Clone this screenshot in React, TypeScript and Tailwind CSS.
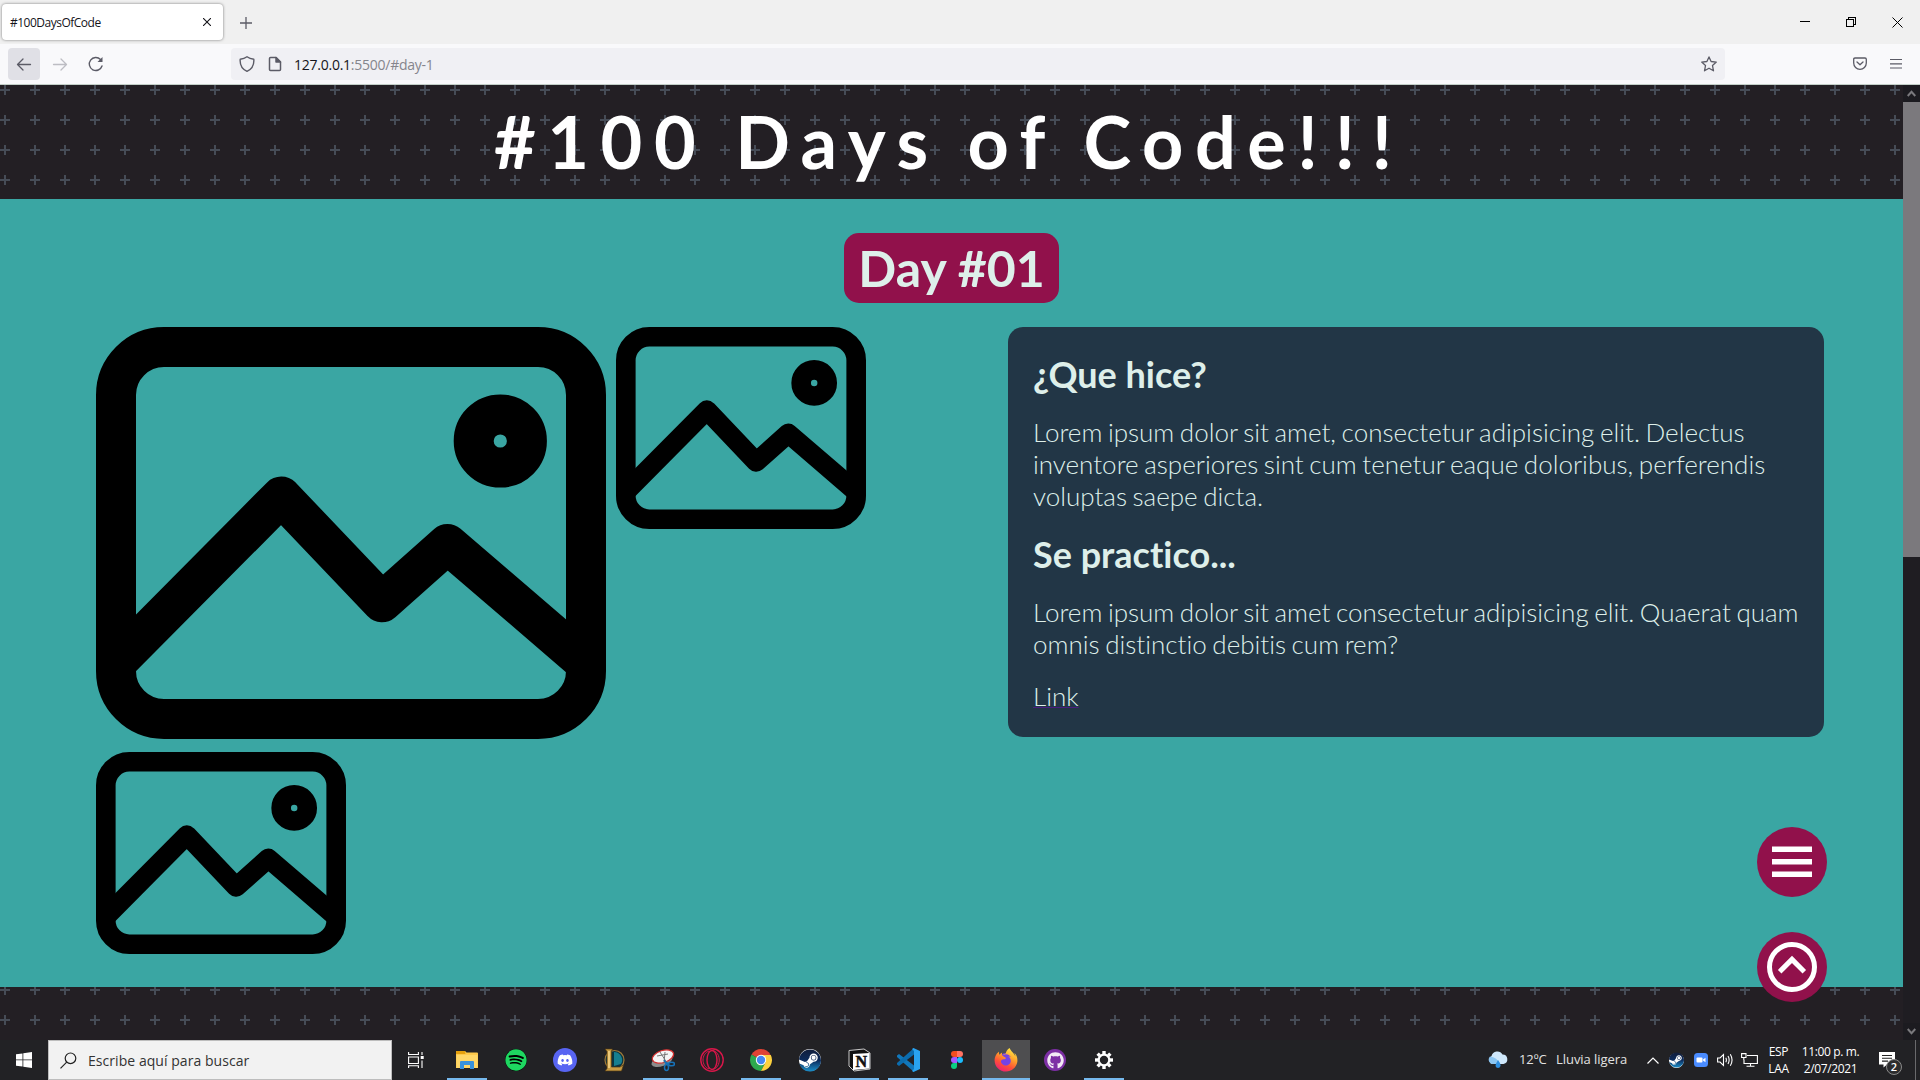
import React from "react";
import { FaDiscord, FaFirefoxBrowser, FaGithub, FaSpotify, FaSteam } from "react-icons/fa";

function Pattern() {
  return (
    <svg className="absolute inset-0 h-full w-full" aria-hidden="true">
      <defs>
        <pattern id="plus" width="30" height="30" patternUnits="userSpaceOnUse">
          <path d="M0 5H10M5 0V10" stroke="#464c57" strokeWidth="2" />
        </pattern>
      </defs>
      <rect width="100%" height="100%" fill="url(#plus)" />
    </svg>
  );
}

function Picture({ className }: { className: string }) {
  return (
    <svg viewBox="0 0 510 412" preserveAspectRatio="none" className={className} fill="none" stroke="#000" strokeWidth="40" strokeLinejoin="round">
      <rect x="20" y="20" width="470" height="372" rx="48" />
      <circle cx="404.300" cy="114" r="26.600" />
      <path d="M20 336L185.3 169.5L286 275.3L351.5 217L490 336" />
    </svg>
  );
}

function TitleBar() {
  return (
    <div className="flex h-11 items-start bg-[#f0f0f0] pl-0.5">
      <div className="mt-1 flex h-9 w-[221px] items-center rounded-[4px] bg-white pr-3 pl-2 shadow-[0_0_3px_rgba(0,0,0,0.5)]">
        <span className="flex-1 pt-0.5 text-[12px] tracking-[-0.5px] whitespace-nowrap text-[#15141a]">#100DaysOfCode</span>
        <svg width="8" height="8" viewBox="0 0 8 8" stroke="#15141a" strokeWidth="1.1"><path d="M0 0L8 8M8 0L0 8" /></svg>
      </div>
      <svg width="12" height="12" viewBox="0 0 12 12" stroke="#5b5b66" strokeWidth="1.3" className="mt-[17px] ml-[17px]"><path d="M0 6H12M6 0V12" /></svg>
      <div className="flex-1" />
      <svg width="10" height="10" viewBox="0 0 10 10" stroke="#000" className="mt-[17px]" shapeRendering="crispEdges"><path d="M0 4.5H10" /></svg>
      <svg width="10" height="10" viewBox="0 0 10 10" stroke="#000" fill="none" className="mt-[17px] ml-9" shapeRendering="crispEdges"><path d="M.5 2.5H7.5V9.5H.5ZM2.5 2.5V.5H9.5V7.5H7.5" /></svg>
      <svg width="11" height="11" viewBox="0 0 11 11" stroke="#000" className="mt-[17px] mr-[17px] ml-9"><path d="M.5 .5L10.500 10.500M10.500 .5L.5 10.500" /></svg>
    </div>
  );
}

function NavBar() {
  return (
    <div className="flex h-[41px] items-start border-b border-[#c3cfc8] bg-[#f9f9fb] pt-1 pl-2">
      <div className="flex h-8 w-8 items-center justify-center rounded-[4px] bg-[#e0e0e6]">
        <svg width="16" height="16" viewBox="0 0 16 16" fill="none" stroke="#5b5b66" strokeWidth="1.3" strokeLinecap="round" strokeLinejoin="round"><path d="M1.500 8.500H14.500M7 3L1.500 8.500L7 14" /></svg>
      </div>
      <div className="ml-1 flex h-8 w-8 items-center justify-center">
        <svg width="16" height="16" viewBox="0 0 16 16" fill="none" stroke="#bdbdc3" strokeWidth="1.3" strokeLinecap="round" strokeLinejoin="round"><path d="M1.500 8.500H14.500M9 3L14.500 8.500L9 14" /></svg>
      </div>
      <div className="ml-1 flex h-8 w-8 items-center justify-center">
        <svg width="16" height="16" viewBox="0 0 16 16" fill="none" stroke="#5b5b66" strokeWidth="1.4" strokeLinecap="round"><path d="M14 10A6.500 6.500 0 1 1 12.500 3.500" /><path d="M14.500 1V6H9.500Z" fill="#5b5b66" stroke="none" /></svg>
      </div>
      <div className="ml-[119px] flex h-8 w-[1494px] items-center rounded-[4px] bg-[#f0f0f4] pr-2 pl-2">
        <svg width="16" height="16" viewBox="0 0 16 16" fill="none" stroke="#5b5b66" strokeWidth="1.4" strokeLinejoin="round"><path d="M8 .8C6 2.300 3.500 3 1.200 3.200C.8 8 3 13 8 15.300C13 13 15.200 8 14.800 3.200C12.500 3 10 2.300 8 .8Z" /></svg>
        <svg width="14" height="16" viewBox="0 0 14 16" fill="none" stroke="#5b5b66" strokeWidth="1.5" strokeLinejoin="round" className="ml-[13px]"><path d="M2.500 1.500H8L12.500 6V13.500Q12.500 14.500 11.500 14.500H2.500Q1.500 14.500 1.500 13.500V2.500Q1.500 1.500 2.500 1.500Z" /><path d="M8 1.500V6H12.500Z" fill="#5b5b66" /></svg>
        <span className="ml-[12px] pt-px text-[14px] tracking-[-0.25px] whitespace-nowrap text-[#85858c]"><span className="text-[#15141a]">127.0.0.1</span>:5500/#day-1</span>
        <div className="flex-1" />
        <svg width="16" height="16" viewBox="0 0 16 16" fill="none" stroke="#5b5b66" strokeWidth="1.3" strokeLinejoin="round"><path d="M8 .9L10.100 5.500L15.300 6.100L11.500 9.600L12.500 14.800L8 12.200L3.500 14.800L4.500 9.600L.7 6.100L5.900 5.500Z" /></svg>
      </div>
      <div className="ml-32 flex h-8 items-center">
        <svg width="14" height="14" viewBox="0 0 14 14" fill="none" stroke="#5b5b66" strokeWidth="1.3" strokeLinecap="round" strokeLinejoin="round"><path d="M2 1H12Q13.300 1 13.300 2.300V6A6.300 6.300 0 0 1 .7 6V2.300Q.7 1 2 1Z" /><path d="M4 5L7 7.800L10 5" /></svg>
        <svg width="12" height="12" viewBox="0 0 12 12" stroke="#5b5b66" strokeWidth="1.2" className="ml-[23px]"><path d="M0 1.500H12M0 5.800H12M0 10H12" /></svg>
      </div>
    </div>
  );
}

function Scrollbar() {
  return (
    <div className="flex w-[17px] flex-col bg-[#1f1d22]">
      <div className="flex h-[17px] items-center justify-center bg-[#1c1b20]">
        <svg width="9" height="7" viewBox="0 0 9 7" fill="none" stroke="#7a797d" strokeWidth="2"><path d="M.7 6L4.500 1.800L8.300 6" /></svg>
      </div>
      <div className="h-[455px] bg-[#7b797d]" />
      <div className="flex-1" />
      <div className="flex h-[17px] items-center justify-center bg-[#1c1b20]">
        <svg width="9" height="7" viewBox="0 0 9 7" fill="none" stroke="#7a797d" strokeWidth="2"><path d="M.7 1L4.500 5.200L8.300 1" /></svg>
      </div>
    </div>
  );
}

function Page() {
  return (
    <div className="relative flex-1 overflow-hidden bg-[#231f24] font-['Lato',sans-serif] [font-variant-ligatures:none]">
      <Pattern />
      <header className="relative flex h-[114px] items-center justify-center">
        <h1 className="pb-0.5 text-[72px] leading-[86px] font-bold tracking-[11.6px] whitespace-nowrap text-white [word-spacing:-1.3px]">
          #100 Days of Code<span className="tracking-[17px]">!!!</span>
        </h1>
      </header>
      <main className="relative flex h-[788px] flex-col items-center bg-[#3aa6a3] pt-[34px]">
        <h2 className="h-[70px] w-[215px] rounded-[15px] bg-[#91114b] py-[5px] text-center text-[50px] leading-[60px] font-bold whitespace-nowrap text-[#deefea]">Day #01</h2>
        <div className="mt-6 flex w-full items-start pr-[79px] pl-24">
          <div className="flex w-[816px] flex-wrap items-start gap-x-[10px] gap-y-[13px]">
            <Picture className="h-[412px] w-[510px]" />
            <Picture className="h-[202px] w-[250px]" />
            <Picture className="h-[202px] w-[250px]" />
          </div>
          <article className="ml-24 h-[410px] w-[816px] rounded-[15px] bg-[#223646] p-[25px] text-[#deefea]">
            <h3 className="text-[36px] leading-[44px] font-bold">¿Que hice?</h3>
            <p className="mt-5 text-[26px] leading-8 font-light whitespace-nowrap [word-spacing:-1.5px]">
              Lorem ipsum dolor sit amet, consectetur adipisicing elit. Delectus<br />inventore asperiores sint cum tenetur eaque doloribus, perferendis<br />voluptas saepe dicta.
            </p>
            <h3 className="mt-5 text-[36px] leading-[44px] font-bold">Se practico...</h3>
            <p className="mt-5 text-[26px] leading-8 font-light whitespace-nowrap [word-spacing:-1.5px]">
              Lorem ipsum dolor sit amet consectetur adipisicing elit. Quaerat quam<br />omnis distinctio debitis cum rem?
            </p>
            <p className="mt-5 text-[26px] leading-8 font-light">
              <a className="underline decoration-[#4b1d80] decoration-1 underline-offset-1">Link</a>
            </p>
          </article>
        </div>
      </main>
      <div className="absolute right-[76px] bottom-[38px] flex flex-col gap-[35px]">
        <button className="flex h-[70px] w-[70px] items-center justify-center rounded-full bg-[#91114b]">
          <svg width="40" height="32" viewBox="0 0 40 32" stroke="#fff" strokeWidth="5.500"><path d="M0 3.300H40M0 15.800H40M0 28.300H40" /></svg>
        </button>
        <button className="flex h-[70px] w-[70px] items-center justify-center rounded-full bg-[#91114b]">
          <svg width="50" height="50" viewBox="0 0 50 50" fill="none" stroke="#fff" strokeWidth="5"><circle cx="25" cy="25" r="22.500" /><path d="M12.700 29.700L25 17.400L37.300 29.700" /></svg>
        </button>
      </div>
    </div>
  );
}

function Cell({ active, focused, children }: { active?: boolean; focused?: boolean; children: React.ReactNode }) {
  return (
    <div className={focused ? "mr-px flex h-10 w-12 flex-col items-center bg-[#4e4e50]" : "mr-px flex h-10 w-12 flex-col items-center"}>
      <div className="flex h-[38px] items-center justify-center pt-0.5">{children}</div>
      {active && <div className={focused ? "h-0.5 w-12 bg-[#76b9ed]" : "h-0.5 w-10 bg-[#76b9ed]"} />}
    </div>
  );
}

function SteamBadge({ className, id, size }: { className: string; id: string; size: number }) {
  return (
    <span className={className}>
      <svg width="0" height="0" className="absolute"><defs><linearGradient id={id} x1="0" y1="0" x2="0" y2="1"><stop offset="0" stopColor="#111d3a" /><stop offset=".5" stopColor="#0c2b5c" /><stop offset="1" stopColor="#1b8fc9" /></linearGradient></defs></svg>
      <FaSteam size={size} fill={`url(#${id})`} />
    </span>
  );
}

function Taskbar() {
  return (
    <div className="flex h-10 items-center bg-[#222225] font-['Open_Sans',sans-serif] text-white">
      <div className="flex h-10 w-12 items-center justify-center">
        <svg width="16" height="16" viewBox="0 0 16 16" fill="#fff"><path d="M0 2.300L6.500 1.400V7.500H0ZM7.300 1.300L16 0V7.500H7.300ZM0 8.300H6.500V14.500L0 13.700ZM7.300 8.300H16V16L7.300 14.700Z" /></svg>
      </div>
      <div className="flex h-10 w-[344px] items-center border border-[#bdbdbd] bg-[#f2f2f2] pl-[11px]">
        <svg width="17" height="17" viewBox="0 0 17 17" fill="none" stroke="#222" strokeWidth="1.200"><circle cx="10.500" cy="6.300" r="5.300" /><path d="M6.700 10.200L.5 16.400" /></svg>
        <span className="ml-[11px] text-[14px] tracking-[0.05px] whitespace-nowrap text-[#333]">Escribe aquí para buscar</span>
      </div>
      <div className="mr-[3px] flex h-10 w-12 items-center justify-center">
        <svg width="16" height="16" viewBox="0 0 16 16" fill="none" stroke="#fff" strokeWidth="1.100"><path d="M.6 0V2.500H10.400V0M.6 5H10.400V11.500H.6ZM.6 16V13.800H10.400V16M14 0V3M14 8.500V16" /><rect x="12.700" y="4" width="3" height="3" fill="#fff" stroke="none" /></svg>
      </div>
      <Cell active>
        <svg width="22" height="18" viewBox="0 0 22 18"><path d="M0 0H9L10.500 1.500H21Q22 1.500 22 2.500V17H0Z" fill="#fdc94c" /><path d="M0 0H9L9.500 3H0Z" fill="#e5a00d" /><path d="M.5 4H21.500V17H.5Z" fill="#ffd768" /><path d="M4 18V11Q4 10 5 10H17Q18 10 18 11V18H14V14H8V18Z" fill="#3892dc" /></svg>
      </Cell>
      <Cell>
        <div className="flex h-[22px] w-[22px] items-center justify-center rounded-full bg-black"><FaSpotify size={22} color="#1ed760" /></div>
      </Cell>
      <Cell>
        <div className="flex h-6 w-6 items-center justify-center rounded-full bg-[#5865f2]"><FaDiscord size={16} color="#fff" /></div>
      </Cell>
      <Cell>
        <svg width="22" height="24" viewBox="0 0 22 24"><circle cx="11.500" cy="12" r="9.500" fill="#0b3441" stroke="#a07a37" strokeWidth="1.200" /><path d="M11 4A8 8 0 0 1 18 16L11 18Z" fill="#167f8f" /><path d="M2 1H9.500L8.500 3V19H17L20.500 17L18.500 23H2L4 20.500V3.500Z" fill="#c89b43" stroke="#4e3812" strokeWidth=".7" /><path d="M5 3H7V20H5Z" fill="#ecc979" /></svg>
      </Cell>
      <Cell active>
        <svg width="24" height="24" viewBox="0 0 24 24"><ellipse cx="11" cy="13" rx="11" ry="5" fill="#8c8c8c" transform="rotate(-20 11 13)" /><ellipse cx="12" cy="8.500" rx="11" ry="6" fill="#f4f4f4" stroke="#d22c2c" strokeWidth="1.200" transform="rotate(-18 12 8.500)" /><path d="M6 8L17 6M9 4L16 15M14 4L13 15" stroke="#777" strokeWidth="1" /><g fill="none" stroke="#1671b8" strokeWidth="1.500"><ellipse cx="15.500" cy="19.500" rx="2" ry="3" /><ellipse cx="20.500" cy="16" rx="3" ry="1.800" /><path d="M13 12L16 17M14 14L18 16" /></g></svg>
      </Cell>
      <Cell>
        <svg width="24" height="24" viewBox="0 0 24 24" fill="none" stroke="#d9174a" strokeWidth="1.400"><circle cx="12" cy="12" r="11.200" /><ellipse cx="12" cy="12" rx="5" ry="9.500" /><path d="M11 2.500C22 2 22 22 11 21.500M9 3C1 6 1 18 9 21" strokeWidth="1" /></svg>
      </Cell>
      <Cell active>
        <svg width="22" height="22" viewBox="0 0 22 22"><path d="M11 11L1.500 5.500A11 11 0 0 1 20.500 5.500Z" fill="#e04335" /><path d="M11 11L1.500 5.500A11 11 0 0 0 11 22L15.500 13.500Z" fill="#2da94f" /><path d="M11 6H20.800A11 11 0 0 1 11 22L15.500 13.500Z" fill="#fdd13f" /><circle cx="11" cy="11" r="5.200" fill="#fff" /><circle cx="11" cy="11" r="4.200" fill="#4587f3" /></svg>
      </Cell>
      <Cell><SteamBadge id="steam-l" size={23} className="flex h-[22px] w-[22px] items-center justify-center rounded-full bg-white" /></Cell>
      <Cell active>
        <svg width="23" height="24" viewBox="0 0 23 24"><path d="M1 2.500L16 1L22 5V21L6 23L1 18Z" fill="#111" stroke="#ddd" strokeWidth=".9" /><path d="M5 6L21.500 5V20.500L5 22Z" fill="#fff" /><text x="13.200" y="19" textAnchor="middle" fontFamily="Liberation Serif" fontSize="16" fontWeight="700" fill="#111" stroke="#111" strokeWidth=".5">N</text></svg>
      </Cell>
      <Cell active>
        <svg width="24" height="24" viewBox="0 0 24 24"><path d="M1 7.500L3 6L18 17.500V24L1 9Z" fill="#1177bb" /><path d="M1 16.500L3 18L18 6.500V0L1 15Z" fill="#0b6cae" /><path d="M17.500 0L24 3V21L17.500 24L16 23L18 21V3L16 1Z" fill="#29a3f0" /></svg>
      </Cell>
      <Cell>
        <svg width="12" height="18" viewBox="0 0 12 18"><path d="M6 0H3A3 3 0 0 0 3 6H6Z" fill="#f24e1e" /><path d="M6 0H9A3 3 0 0 1 9 6H6Z" fill="#ff7262" /><path d="M6 6H3A3 3 0 0 0 3 12H6Z" fill="#a259ff" /><circle cx="9" cy="9" r="3" fill="#1abcfe" /><path d="M6 12H3A3 3 0 1 0 6 15Z" fill="#0acf83" /></svg>
      </Cell>
      <Cell active focused>
        <svg width="24" height="24" viewBox="0 0 24 24">
          <defs><linearGradient id="fox" x1=".8" y1="0" x2=".3" y2="1"><stop offset="0" stopColor="#fff04a" /><stop offset=".4" stopColor="#ffa02b" /><stop offset=".7" stopColor="#ff5038" /><stop offset="1" stopColor="#ee1f75" /></linearGradient></defs>
          <circle cx="12" cy="13" r="8" fill="#7542e5" />
          <FaFirefoxBrowser size={24} fill="url(#fox)" />
        </svg>
      </Cell>
      <Cell>
        <div className="flex h-[22px] w-[22px] items-center justify-center rounded-full bg-[#7d2fa5]"><FaGithub size={17} color="#f3eaf6" /></div>
      </Cell>
      <Cell active>
        <svg width="18" height="18" viewBox="-9 -9 18 18" fill="none" stroke="#fff"><circle r="5.300" strokeWidth="2.200" />{[0, 45, 90, 135, 180, 225, 270, 315].map((a) => <path key={a} d="M0 -6V-9" strokeWidth="3.400" transform={`rotate(${a})`} />)}</svg>
      </Cell>
      <div className="flex-1" />
      <svg width="22" height="18" viewBox="0 0 22 18"><path d="M5 13A4.500 4.500 0 0 1 4.500 5A6 6 0 0 1 15.500 3.500A4.800 4.800 0 0 1 16.500 13Z" fill="#cfe8fb" /><path d="M5 13A4.500 4.500 0 0 1 3 5.500Q10 6 13 13Z" fill="#8cc6f2" /><path d="M11 9Q14 13 13.500 15A2.600 2.600 0 0 1 8.500 15Q8.500 13 11 9Z" fill="#2e8fe0" /></svg>
      <div className="ml-[10px] w-[37px] text-[13px] tracking-[-0.1px] whitespace-nowrap text-[#e2e2e2]">12ºC</div>
      <div className="w-[85px] text-[13px] tracking-[-0.05px] whitespace-nowrap text-[#e2e2e2]">Lluvia ligera</div>
      <div className="flex w-6 justify-center"><svg width="12" height="7" viewBox="0 0 12 7" fill="none" stroke="#fff" strokeWidth="1.200"><path d="M.5 6.500L6 1L11.500 6.500" /></svg></div>
      <div className="flex w-[23px] justify-center"><SteamBadge id="steam-s" size={16} className="flex h-[15px] w-[15px] items-center justify-center rounded-full bg-white" /></div>
      <div className="flex w-[25px] justify-center">
        <svg width="14" height="14" viewBox="0 0 14 14"><rect width="14" height="14" rx="3.500" fill="#4a8cff" /><rect x="2.500" y="4.500" width="6" height="5" rx="1" fill="#fff" /><path d="M9 6.500L11.500 4.700V9.300L9 7.500Z" fill="#fff" /></svg>
      </div>
      <div className="flex w-6 justify-center">
        <svg width="17" height="14" viewBox="0 0 17 14" fill="none" stroke="#fff" strokeWidth="1.100"><path d="M.6 5H3L6.500 1.500V12.500L3 9H.6Z" /><path d="M8.800 4.800Q10 7 8.800 9.200M11 3Q13.300 7 11 11M13.300 1.200Q16.800 7 13.300 12.800" /></svg>
      </div>
      <div className="flex w-6 justify-center">
        <svg width="17" height="14" viewBox="0 0 17 14" fill="none" stroke="#fff" strokeWidth="1.100"><path d="M6 2.500H16.400V10.500H3V7M9.500 10.500V13M5.500 13.300H13.500M.6 .6H5V4.500H.6ZM2.800 4.500V7" /></svg>
      </div>
      <div className="w-[35px] text-center text-[12px] leading-[17px] tracking-[-0.3px]">ESP<br />LAA</div>
      <div className="w-[69px] text-center text-[12px] leading-[17px] tracking-[-0.35px] whitespace-nowrap">11:00 p. m.<br />2/07/2021</div>
      <div className="relative flex h-10 w-[50px] items-center pl-[14px]">
        <svg width="16" height="16" viewBox="0 0 16 16"><path d="M0 0H16V12.500H8L4.500 15.500V12.500H0Z" fill="#fff" /><path d="M3 3.500H13M3 6.300H13M3 9.100H9" stroke="#222" strokeWidth="1.100" /></svg>
        <div className="absolute top-[19px] left-[21px] flex h-4 w-4 items-center justify-center rounded-full border border-[#8a8a8a] bg-[#2c2c2e] text-[11px] font-semibold">2</div>
      </div>
      <div className="mr-1 h-10 w-px bg-[#6a6a6c]" />
    </div>
  );
}

export default function App() {
  return (
    <div className="flex h-[1080px] w-[1920px] flex-col overflow-hidden font-['Open_Sans',sans-serif]">
      <TitleBar />
      <NavBar />
      <div className="flex h-[955px]">
        <Page />
        <Scrollbar />
      </div>
      <Taskbar />
    </div>
  );
}
